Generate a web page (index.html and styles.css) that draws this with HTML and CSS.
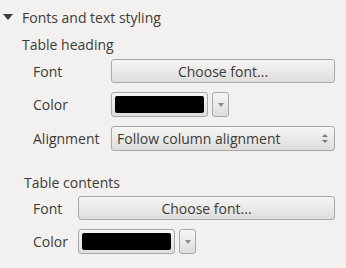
FILE: index.html
```html
<!DOCTYPE html>
<html lang="en">
<head>
    <meta charset="UTF-8">
    <title>Fonts and text styling</title>
    <link rel="stylesheet" href="styles.css">
</head>
<body>
    <div class="section-title">
        <span class="arrow"></span>
        <span>Fonts and text styling</span>
    </div>

    <div class="group heading-group">
        <div class="group-title">Table heading</div>
        <div class="rows">
            <label>Font</label>
            <button class="btn">Choose font...</button>
            <label>Color</label>
            <div class="color-pick">
                <button class="btn swatch-btn"><span class="swatch"></span></button>
                <button class="btn drop-btn"><span class="tri"></span></button>
            </div>
            <label>Alignment</label>
            <div class="btn combo">
                <span>Follow column alignment</span>
                <span class="spin"><span class="up"></span><span class="down"></span></span>
            </div>
        </div>
    </div>

    <div class="group contents-group">
        <div class="group-title">Table contents</div>
        <div class="rows">
            <label>Font</label>
            <button class="btn">Choose font...</button>
            <label>Color</label>
            <div class="color-pick">
                <button class="btn swatch-btn"><span class="swatch"></span></button>
                <button class="btn drop-btn"><span class="tri"></span></button>
            </div>
        </div>
    </div>
</body>
</html>
```

FILE: styles.css
```css
body {
    margin: 0;
    background-color: #f2f1f0;
    font-family: "Open Sans", "Noto Sans", sans-serif;
    font-size: 14px;
    color: #3c3b37;
}
.section-title {
    display: flex;
    align-items: center;
    height: 20px;
    padding-top: 7px;
    padding-left: 3px;
}
.arrow {
    width: 0;
    height: 0;
    border-left: 5px solid transparent;
    border-right: 5px solid transparent;
    border-top: 6px solid #3c3b37;
    margin-right: 9px;
}
.group-title {
    line-height: 20px;
    height: 20px;
}
.heading-group {
    margin-top: 8px;
    padding-left: 22px;
}
.contents-group {
    margin-top: 22px;
    padding-left: 24px;
}
.rows {
    display: grid;
    align-items: center;
    row-gap: 9px;
    margin-top: 4px;
    padding-left: 11px;
    padding-right: 11px;
}
.heading-group .rows {
    grid-template-columns: 78px 1fr;
}
.contents-group .rows {
    grid-template-columns: 45px 1fr;
    margin-top: 3px;
    padding-left: 9px;
}
.btn {
    box-sizing: border-box;
    height: 24px;
    border: 1px solid #a9a8a5;
    border-radius: 3px;
    background: linear-gradient(#f6f6f5, #dedddb);
    font-family: inherit;
    font-size: 14px;
    color: #3c3b37;
    padding: 0;
    margin: 0;
}
.color-pick {
    display: flex;
    gap: 4px;
    height: 25px;
}
.swatch-btn {
    width: 97px;
    height: 25px;
    padding: 3px;
    display: flex;
}
.swatch {
    flex: 1;
    background: #000;
    border-radius: 2px;
}
.drop-btn {
    width: 17px;
    height: 25px;
    display: flex;
    align-items: center;
    justify-content: center;
}
.tri {
    width: 0;
    height: 0;
    border-left: 3px solid transparent;
    border-right: 3px solid transparent;
    border-top: 4px solid #8a8a88;
}
.combo {
    display: flex;
    align-items: center;
    justify-content: space-between;
    padding: 0 6px 0 5px;
    height: 25px;
}
.spin {
    display: flex;
    flex-direction: column;
    gap: 3px;
}
.up, .down {
    width: 0;
    height: 0;
    border-left: 3px solid transparent;
    border-right: 3px solid transparent;
}
.up {
    border-bottom: 3px solid #7a7a78;
}
.down {
    border-top: 3px solid #7a7a78;
}
```
